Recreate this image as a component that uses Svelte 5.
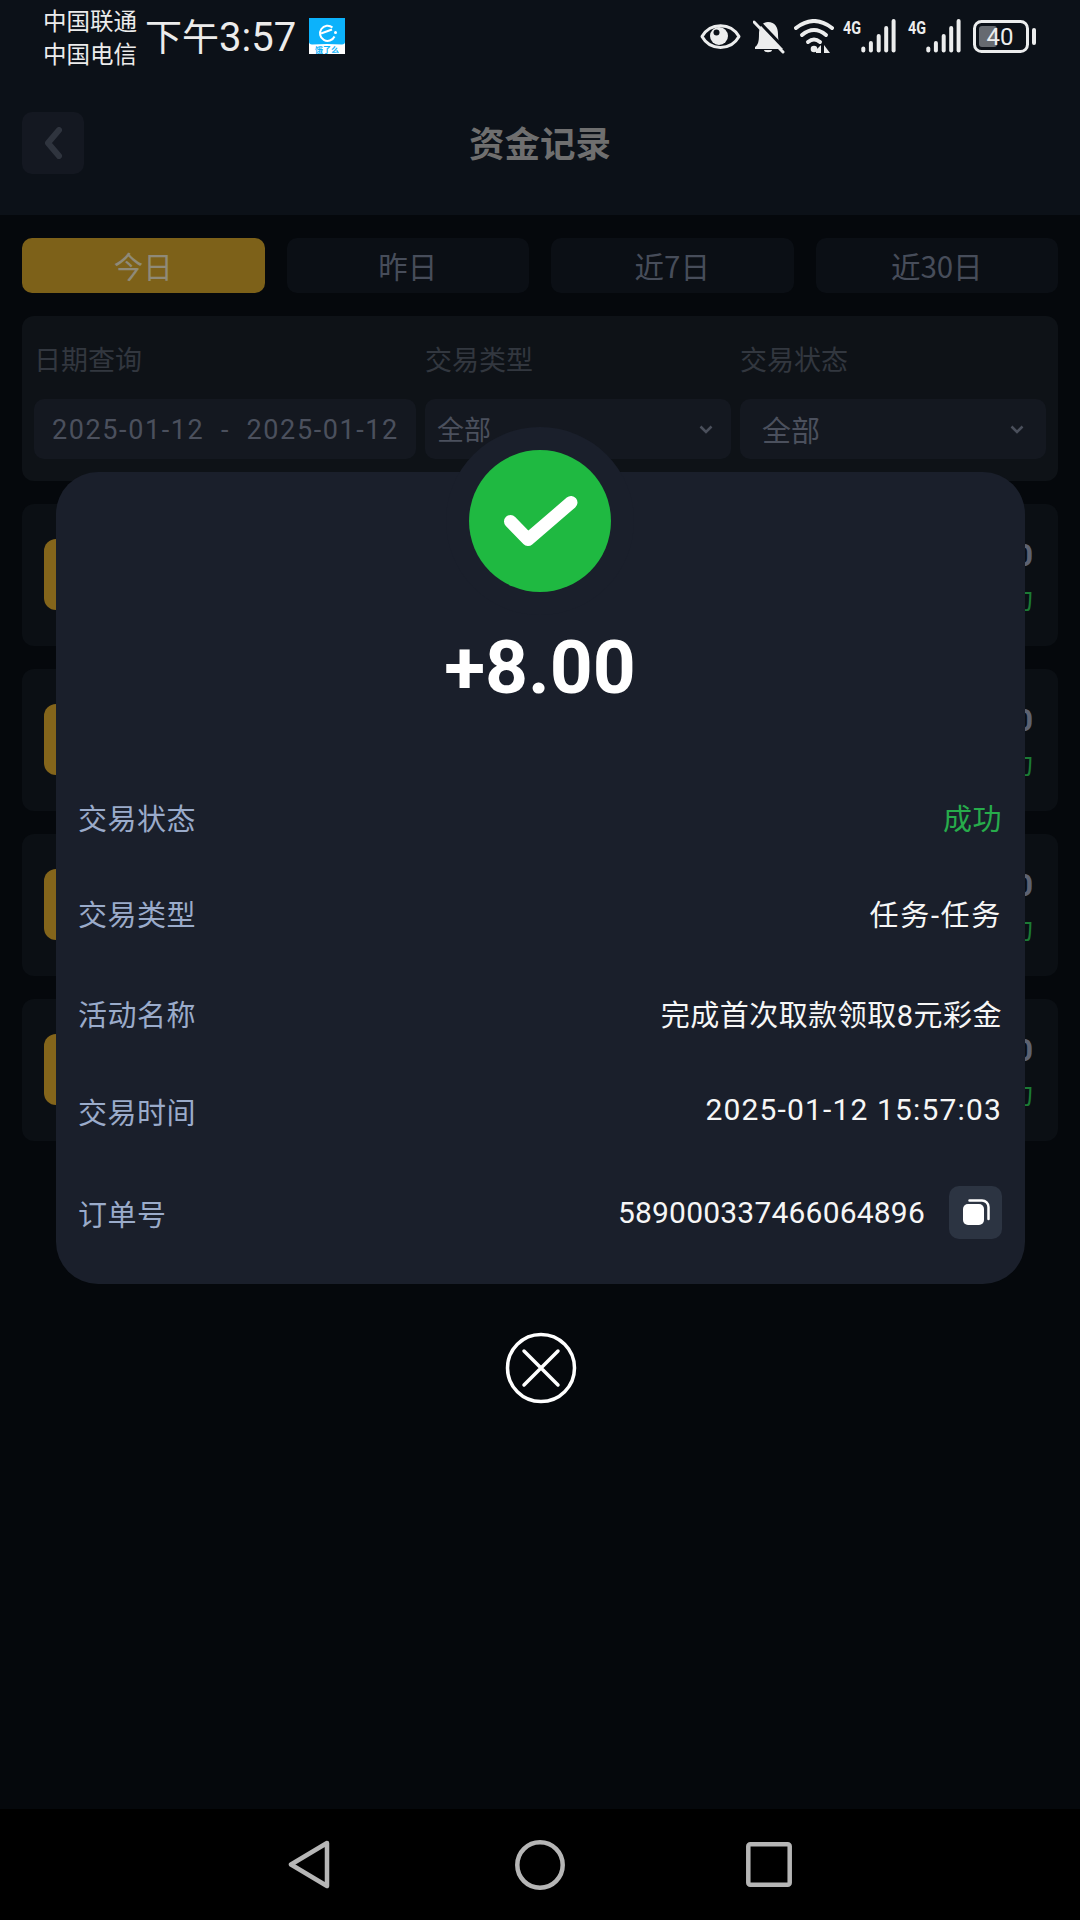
<script>
  const tabs = ['今日', '昨日', '近7日', '近30日'];
  const cards = [1, 2, 3, 4];
  const rows = [
    { label: '交易状态', value: '成功', ok: true },
    { label: '交易类型', value: '任务-任务', wide: true },
    { label: '活动名称', value: '完成首次取款领取8元彩金' },
    { label: '交易时间', value: '2025-01-12 15:57:03', num: true }
  ];
</script>

{#snippet signal()}
  <svg class="sig" width="53" height="34" viewBox="0 0 53 34">
    <text x="0" y="14.5" textLength="18" lengthAdjust="spacingAndGlyphs" class="g4">4G</text>
    <g stroke="#eceded" stroke-width="4" stroke-linecap="round">
      <path d="M20.3 29.5v2" />
      <path d="M27.9 24v7.5" />
      <path d="M35.7 17v14.5" />
      <path d="M43.2 9v22.5" />
      <path d="M50.6 2v29.5" />
    </g>
  </svg>
{/snippet}

<div class="page">
  <header class="top">
    <div class="status">
      <div class="carriers"><span>中国联通</span><span>中国电信</span></div>
      <span class="time">下午<b>3:57</b></span>
      <svg class="app" width="36" height="36" viewBox="0 0 36 36">
        <rect width="36" height="36" fill="#fff" />
        <path d="M0 0h36v24q0 2-3 2.500l-15 -0.500-15 .5q-3-.5-3-2.500z" fill="#0cb2fb" />
        <path d="M23.500 9.500a7.600 7.600 0 1 0 2 9" fill="none" stroke="#fff" stroke-width="2" />
        <path d="M12 15.500l11-4" stroke="#fff" stroke-width="2" />
        <circle cx="26.500" cy="14.500" r="1.500" fill="#fff" />
        <text x="18" y="34.500" class="apptext">饿了么</text>
      </svg>
      <div class="icons">
        <svg width="41" height="27" viewBox="0 0 41 27">
          <path d="M2 13.500C10 -1 31 -1 39 13.500C31 28 10 28 2 13.500Z" fill="none" stroke="#eceded" stroke-width="3" stroke-linejoin="round" />
          <circle cx="19" cy="13" r="9" fill="#eceded" />
          <circle cx="16.500" cy="9.500" r="3" fill="#0c1118" />
        </svg>
        <svg class="bell" width="32" height="34" viewBox="0 0 32 34">
          <path d="M15 2c7 0 10 5 10 12 0 8 2 11 5 13v2H2v-2c3-2 4-5 4-13 0-7 3-12 9-12z" fill="#eceded" />
          <path d="M11 30h8c0 3-8 3-8 0z" fill="#eceded" />
          <path d="M3.500 -1L33 30" stroke="#0c1118" stroke-width="3" />
          <path d="M1 2l29 30" stroke="#eceded" stroke-width="3" stroke-linecap="round" />
        </svg>
        <svg class="wifi" width="40" height="34" viewBox="0 0 40 34">
          <g fill="none" stroke="#eceded" stroke-width="4" stroke-linecap="round">
            <path d="M2 9Q20 -5 38 9" />
            <path d="M8 16Q20 6 32 16" />
            <path d="M14 23Q20 18 26 23" />
          </g>
          <circle cx="20" cy="30" r="3.300" fill="#eceded" />
          <path d="M22 31l5-5v8h-5zM30 26v8h6z" fill="#eceded" />
        </svg>
        {@render signal()}
        <div class="gap12">{@render signal()}</div>
        <svg class="bat" width="63" height="33" viewBox="0 0 63 33">
          <rect x="1.500" y="1.500" width="53" height="30" rx="7" fill="none" stroke="#eceded" stroke-width="3" />
          <rect x="6" y="6" width="18" height="21" rx="3" fill="#666a70" />
          <text x="27" y="25" class="battext">40</text>
          <rect x="59" y="8" width="4" height="17" rx="2" fill="#eceded" />
        </svg>
      </div>
    </div>
    <div class="nav">
      <div class="back">
        <svg width="19" height="32" viewBox="0 0 19 32">
          <path d="M15 3L4 16l11 13" fill="none" stroke="#2f343e" stroke-width="6" stroke-linecap="round" stroke-linejoin="round" />
        </svg>
      </div>
      <h1>资金记录</h1>
      <span></span>
    </div>
  </header>

  <main>
    <div class="tabs">
      {#each tabs as t, i}
        <div class="tab" class:active={i === 0}>{t}</div>
      {/each}
    </div>

    <section class="filter">
      <div class="col">
        <label>日期查询</label>
        <div class="field date">2025-01-12&nbsp; -&nbsp; 2025-01-12</div>
      </div>
      <div class="col">
        <label>交易类型</label>
        <div class="field sel t">全部
          <svg width="14" height="9" viewBox="0 0 14 9"><path d="M1.500 1.500L7 7l5.500-5.500" fill="none" stroke="#4a4f5b" stroke-width="2.500" /></svg>
        </div>
      </div>
      <div class="col">
        <label>交易状态</label>
        <div class="field sel s">全部
          <svg width="14" height="9" viewBox="0 0 14 9"><path d="M1.500 1.500L7 7l5.500-5.500" fill="none" stroke="#4a4f5b" stroke-width="2.500" /></svg>
        </div>
      </div>
    </section>

    {#each cards as c}
      <article class="card">
        <div class="thumb"></div>
        <div class="right">
          <span class="amt">+8.00</span>
          <span class="st">成功</span>
        </div>
      </article>
    {/each}
  </main>

  <nav class="sysnav">
    <svg width="42" height="49" viewBox="0 0 42 49">
      <path d="M39 3L3 24.500l36 21.500z" fill="none" stroke="#b6b6b6" stroke-width="4.500" stroke-linejoin="round" />
    </svg>
    <svg width="50" height="50" viewBox="0 0 50 50">
      <circle cx="25" cy="25" r="22.700" fill="none" stroke="#b6b6b6" stroke-width="4.500" />
    </svg>
    <svg class="sq" width="46" height="45" viewBox="0 0 46 45">
      <rect x="2.300" y="2.300" width="41.400" height="40.400" rx="2" fill="none" stroke="#b6b6b6" stroke-width="4.500" />
    </svg>
  </nav>

  <div class="overlay">
    <div class="modal">
      <div class="halo">
        <div class="okc">
          <svg width="142" height="142" viewBox="0 0 142 142">
            <path d="M41.500 71.500L59 89.500l43-37" fill="none" stroke="#fff" stroke-width="13" stroke-linecap="round" stroke-linejoin="round" />
          </svg>
        </div>
      </div>
      <div class="big">+8.00</div>
      <div class="rows">
        {#each rows as r}
          <div class="row">
            <span class="k">{r.label}</span>
            <span class="v" class:ok={r.ok} class:num={r.num} class:wide={r.wide}>{r.value}</span>
          </div>
        {/each}
        <div class="row last">
          <span class="k">订单号</span>
          <div class="ord">
            <span class="v order">589000337466064896</span>
            <button aria-label="复制">
              <svg width="28" height="27" viewBox="0 0 28 27">
                <rect x="1" y="5" width="21" height="21" rx="5" fill="#fff" />
                <path d="M7.500 1.500h12.500a6.500 6.500 0 0 1 6.500 6.500v12" fill="none" stroke="#fff" stroke-width="2.500" stroke-linecap="round" />
              </svg>
            </button>
          </div>
        </div>
      </div>
    </div>
    <svg class="close" width="72" height="72" viewBox="0 0 72 72">
      <circle cx="36" cy="36" r="33.500" fill="none" stroke="#fff" stroke-width="3.500" />
      <path d="M19 19l34 34M53 19L19 53" stroke="#fff" stroke-width="3.500" stroke-linecap="round" />
    </svg>
  </div>
</div>

<style>
  :global(body) {
    margin: 0;
    background: #05080c;
  }
  .page {
    position: relative;
    width: 1080px;
    height: 1920px;
    display: flex;
    flex-direction: column;
    overflow: hidden;
    background: #05080c;
    font-family: "Noto Sans CJK SC", "Noto Sans", sans-serif;
  }
  .top {
    height: 215px;
    flex: none;
    background: #0c1118;
  }
  .status {
    height: 74px;
    display: flex;
    align-items: flex-start;
    padding-left: 43px;
    color: #ececec;
  }
  .carriers {
    display: flex;
    flex-direction: column;
    margin-top: 4px;
    font-size: 23.500px;
    line-height: 33px;
    width: 94px;
    white-space: nowrap;
  }
  .time {
    margin: 15px 0 0 8px;
    width: 152px;
    font-family: Roboto, "Noto Sans CJK SC", sans-serif;
    font-size: 37px;
    line-height: 46px;
    white-space: nowrap;
  }
  .time b {
    font-weight: 400;
    font-size: 40px;
  }
  .app {
    margin: 18px 0 0 12px;
  }
  .apptext {
    font-size: 8px;
    fill: #0cb2fb;
    text-anchor: middle;
    font-weight: 700;
  }
  .icons {
    position: relative;
    margin: 19px 0 0 355px;
    display: flex;
    align-items: flex-start;
    gap: 12px;
  }
  .icons > svg:first-child {
    margin-top: 4px;
  }
  .bell { margin-top: 1px; }
  .wifi { margin-left: -3px; }
  .sig {
    margin-left: -3px;
    overflow: visible;
  }
  .gap12 .sig { margin-left: 0; }
  .gap12 { height: 34px; }
  .g4 {
    font-family: Roboto, sans-serif;
    font-weight: 700;
    font-size: 19px;
    fill: #eceded;
  }
  .bat { margin-top: 1px; }
  .battext {
    font-family: Roboto, sans-serif;
    font-size: 24px;
    text-anchor: middle;
    fill: #eceded;
  }
  .nav {
    display: grid;
    grid-template-columns: 62px 1fr 62px;
    align-items: center;
    padding: 38px 22px 0 22px;
  }
  .back {
    height: 62px;
    background: #141821;
    border-radius: 10px;
    display: flex;
    align-items: center;
    justify-content: center;
  }
  h1 {
    margin: -2px 0 0;
    text-align: center;
    font-size: 35.500px;
    line-height: 62px;
    font-weight: 700;
    color: #6f6f6f;
  }
  main {
    flex: 1;
    padding: 23px 22px 0;
    display: flex;
    flex-direction: column;
    gap: 23px;
  }
  .tabs {
    display: grid;
    grid-template-columns: repeat(4, 1fr);
    gap: 22px;
  }
  .tab {
    height: 55px;
    border-radius: 10px;
    background: #0b0f15;
    color: #474d5a;
    font-size: 29.500px;
    line-height: 55px;
    text-align: center;
  }
  .tab.active {
    background: #7d6119;
    color: #8f8a78;
  }
  .filter {
    height: 165px;
    box-sizing: border-box;
    padding: 28px 12px 22px;
    display: grid;
    grid-template-columns: 382px 306px 306px;
    gap: 9px;
    border-radius: 12px;
    background: #0e1217;
  }
  .col {
    display: flex;
    flex-direction: column;
    gap: 23px;
  }
  label {
    display: block;
    height: 32px;
    font-size: 27px;
    line-height: 30px;
    color: #32373f;
    white-space: nowrap;
  }
  .field {
    height: 60px;
    border-radius: 10px;
    background: #141820;
    color: #4b505d;
    font-size: 27px;
    line-height: 60px;
    box-sizing: border-box;
    white-space: nowrap;
  }
  .date {
    padding-left: 18px;
    font-family: Roboto, sans-serif;
    letter-spacing: 1.600px;
    line-height: 62px;
  }
  .sel {
    display: flex;
    align-items: center;
    justify-content: space-between;
  }
  .sel.t { padding: 0 18px 0 12px; }
  .sel.s {
    padding: 0 22px 0 22px;
    font-size: 29px;
  }
  .card {
    position: relative;
    height: 142px;
    flex: none;
    box-sizing: border-box;
    border-radius: 12px;
    background: #0b0f14;
    padding: 35px 25px 0 22px;
    display: flex;
    justify-content: space-between;
  }
  .thumb {
    width: 72px;
    height: 71px;
    border-radius: 12px;
    background: #84651b;
  }
  .right {
    margin-top: -2px;
    display: flex;
    flex-direction: column;
    align-items: flex-end;
    gap: 8px;
  }
  .amt {
    font-family: Roboto, sans-serif;
    font-size: 32px;
    line-height: 36px;
    font-weight: 700;
    color: #5c6272;
  }
  .st {
    font-size: 27px;
    line-height: 34px;
    color: #1b7a35;
  }
  .sysnav {
    height: 111px;
    flex: none;
    background: #000;
    display: flex;
    justify-content: center;
    align-items: center;
    gap: 185px;
    box-sizing: border-box;
    padding: 0;
    margin-top: auto;
  }
  .sq { margin-left: -4px; }
  .overlay {
    position: absolute;
    top: 472px;
    left: 56px;
    width: 969px;
    display: flex;
    flex-direction: column;
    align-items: center;
  }
  .modal {
    position: relative;
    box-sizing: border-box;
    width: 100%;
    height: 812px;
    padding: 155px 23px 0 22px;
    border-radius: 42px;
    background: #1a1f2b;
  }
  .halo {
    position: absolute;
    top: -45px;
    left: 390px;
    width: 188px;
    height: 188px;
    border-radius: 50%;
    background: #1a1f2b;
    display: flex;
    align-items: center;
    justify-content: center;
  }
  .okc {
    width: 142px;
    height: 142px;
    border-radius: 50%;
    background: #1fb941;
    line-height: 0;
  }
  .big {
    font-family: Roboto, sans-serif;
    font-weight: 700;
    font-size: 75px;
    line-height: 80px;
    text-align: center;
    color: #fff;
  }
  .rows {
    margin-top: 91px;
    display: flex;
    flex-direction: column;
    gap: 60px;
  }
  .row {
    height: 38px;
    display: flex;
    align-items: center;
    justify-content: space-between;
    font-size: 29px;
    letter-spacing: 0.500px;
  }
  .row:nth-child(2) { margin-top: -2px; }
  .row:nth-child(3) { margin-top: 2px; }
  .row.last { margin-top: 3px; }
  .last .k { padding-top: 2px; }
  .k { color: #9aabca; }
  .v {
    color: #f6f6f6;
    font-family: Roboto, "Noto Sans CJK SC", sans-serif;
    white-space: nowrap;
  }
  .v.ok { color: #27ac4b; }
  .v.wide { letter-spacing: 1.700px; }
  .v.num {
    font-size: 30px;
    letter-spacing: 1.150px;
    margin-bottom: 3px;
  }
  .v.order {
    font-size: 30px;
    letter-spacing: 0.200px;
  }
  .ord {
    display: flex;
    align-items: center;
    gap: 24px;
  }
  button {
    width: 53px;
    height: 53px;
    flex: none;
    padding: 0;
    border: 0;
    border-radius: 10px;
    background: #2c3442;
    display: flex;
    align-items: center;
    justify-content: center;
  }
  .close {
    margin-top: 48px;
  }
</style>
